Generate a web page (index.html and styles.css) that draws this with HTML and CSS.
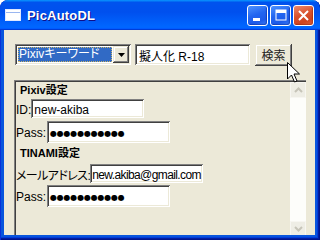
FILE: index.html
```html
<!DOCTYPE html>
<html lang="ja">
<head>
  <meta charset="UTF-8" />
  <meta name="viewport" content="width=device-width, initial-scale=1" />
  <title>PicAutoDL</title>
  <link rel="stylesheet" href="styles.css">
</head>
<body>
  <div class="window">
    <div class="titlebar">
      <svg class="app-icon" width="16" height="16" viewBox="0 0 16 16">
        <rect x="0.5" y="2.5" width="15" height="11" fill="#fff" stroke="#dfe8ff"/>
        <rect x="1" y="3" width="14" height="2" fill="#fff"/>
        <line x1="1" y1="5.5" x2="15" y2="5.5" stroke="#9ab6f0"/>
      </svg>
      <span class="title">PicAutoDL</span>
      <div class="caption-btns">
        <span class="cbtn">
          <svg width="19" height="19" viewBox="0 0 19 19"><rect x="5" y="12" width="7" height="3" fill="#fff"/></svg>
        </span>
        <span class="cbtn">
          <svg width="19" height="19" viewBox="0 0 19 19"><rect x="5" y="4" width="10" height="10" fill="none" stroke="#fff" stroke-width="1"/><rect x="5" y="4" width="10" height="3" fill="#fff"/></svg>
        </span>
        <span class="cbtn close">
          <svg width="19" height="19" viewBox="0 0 19 19"><path d="M5 5 L14 14 M14 5 L5 14" stroke="#fff" stroke-width="2"/></svg>
        </span>
      </div>
    </div>

    <div class="client">
      <div class="toolbar">
        <div class="combo">
          <span class="combo-text">Pixivキーワード</span>
          <span class="combo-btn">
            <svg width="7" height="4" viewBox="0 0 7 4"><path d="M0 0 H7 L3.5 4 Z" fill="#000"/></svg>
          </span>
        </div>
        <div class="field query">擬人化 R-18</div>
        <div class="button">検索</div>
      </div>

      <div class="panel">
        <div class="panel-body">
          <div class="group-title">Pixiv設定</div>
          <div class="row">
            <span class="label">ID:</span>
            <div class="field w-id">new-akiba</div>
          </div>
          <div class="row tall">
            <span class="label">Pass:</span>
            <div class="field w-pass"><span class="dots">●●●●●●●●●●●</span></div>
          </div>

          <div class="group-title second">TINAMI設定</div>
          <div class="row mail">
            <span class="label">メールアドレス:</span>
            <div class="field w-id narrow">new.akiba@gmail.com</div>
          </div>
          <div class="row tall last">
            <span class="label">Pass:</span>
            <div class="field w-pass"><span class="dots">●●●●●●●●●●●</span></div>
          </div>
        </div>

        <div class="scrollbar">
          <span class="sb-btn">
            <svg width="9" height="6" viewBox="0 0 9 6"><path d="M1 5 L4.5 1.5 L8 5" fill="none" stroke="#c6c4b8" stroke-width="2"/></svg>
          </span>
          <span class="sb-track"></span>
          <span class="sb-btn">
            <svg width="9" height="6" viewBox="0 0 9 6"><path d="M1 1 L4.5 4.5 L8 1" fill="none" stroke="#c6c4b8" stroke-width="2"/></svg>
          </span>
        </div>
      </div>
    </div>

    <!-- mouse pointer over the search button -->
    <svg class="cursor" width="13" height="21" viewBox="0 0 13 21">
      <path d="M0.5 0.5 V17 L4.5 13 L7.5 20 L10 19 L7 12 H12.5 Z" fill="#fff" stroke="#000" stroke-width="1" stroke-linejoin="miter"/>
    </svg>
  </div>
</body>
</html>
```

FILE: styles.css
```css
* {
  box-sizing: border-box;
  margin: 0;
  padding: 0;
}

body {
  background: #fff;
  font-family: "Liberation Sans", "Noto Sans CJK JP", sans-serif;
  font-size: 12px;
  font-feature-settings: "palt";
  color: #000;
}

.window {
  position: relative;
  width: 320px;
  height: 240px;
  display: flex;
  flex-direction: column;
  background: #0855dd;
  border-radius: 8px 8px 0 0;
  overflow: hidden;
  box-shadow: inset 1px 0 #0831d9, inset -1px -1px #00138c, inset -2px -2px #001ea0, inset -3px -3px #003bda;
}

.titlebar {
  height: 30px;
  display: flex;
  align-items: center;
  padding: 0 6px 0 5px;
  background: linear-gradient(180deg, #0997ff, #0053ee 8%, #0050ee 40%, #0066ff 88%, #0066ff 93%, #005bff 95%, #003dd7 96%, #003dd7);
  border-radius: 8px 8px 0 0;
}

.app-icon {
  margin-right: 6px;
}

.title {
  font-family: "Liberation Sans", sans-serif;
  font-weight: bold;
  font-size: 13px;
  color: #fff;
  text-shadow: 1px 1px #0f1089;
  letter-spacing: 0.2px;
}

.caption-btns {
  margin-left: auto;
  display: flex;
  gap: 2px;
}

.cbtn {
  width: 21px;
  height: 21px;
  border: 1px solid #fff;
  border-radius: 3px;
  background: linear-gradient(160deg, #4d93ff, #2265f0 45%, #1d5bea 75%, #3a7cf5);
  box-shadow: inset -1px -1px 1px rgba(0, 20, 120, 0.4);
  display: flex;
}

.cbtn.close {
  background: linear-gradient(160deg, #ec8a6c, #d9522e 45%, #cf4420 75%, #e0643e);
  box-shadow: inset -1px -1px 1px rgba(120, 20, 0, 0.4);
}

.client {
  flex: 1;
  margin: 0 5px 5px 4px;
  background: #ece9d8;
  padding: 14px 9px 0 10px;
  overflow: hidden;
}

.toolbar {
  display: flex;
  align-items: center;
  height: 21px;
  margin-left: 1px;
}

.combo {
  width: 116px;
  height: 21px;
  display: flex;
  padding: 2px;
  background: #fff;
  box-shadow: inset 1px 1px #808080, inset -1px -1px #fff, inset 2px 2px #404040, inset -2px -2px #ece9d8;
}

.combo-text {
  flex: 1;
  margin: 1px;
  padding-left: 1px;
  background: #316ac5;
  color: #fff;
  line-height: 15px;
  outline: 1px dotted #c9b46a;
  outline-offset: -1px;
  white-space: nowrap;
  overflow: hidden;
}

.combo-btn,
.button {
  background: #ece9d8;
  box-shadow: inset -1px -1px #404040, inset 1px 1px #ece9d8, inset -2px -2px #808080, inset 2px 2px #fff;
  display: flex;
  align-items: center;
  justify-content: center;
}

.combo-btn {
  width: 16px;
}

.field {
  height: 19px;
  display: flex;
  align-items: center;
  padding: 2px 2px 0 3px;
  background: #fff;
  white-space: nowrap;
  overflow: hidden;
  box-shadow: inset 1px 1px #808080, inset -1px -1px #fff, inset 2px 2px #404040, inset -2px -2px #ece9d8;
}

.field.narrow {
  padding-left: 2px;
  letter-spacing: -0.6px;
}

.query {
  width: 115px;
  height: 21px;
  margin-left: 4px;
  padding-left: 4px;
}

.button {
  width: 37px;
  height: 22px;
  margin-left: 5px;
  color: #222;
}

.panel {
  display: flex;
  height: 157px;
  margin-top: 15px;
  width: 292px;
  border-top: 1px solid #808080;
  border-left: 1px solid #808080;
  box-shadow: inset 1px 1px #404040;
  padding: 1px 0 0 1px;
}

.panel-body {
  flex: 1;
}

.group-title {
  font-size: 11px;
  font-weight: bold;
  line-height: 13px;
  margin: 2px 0 0 4px;
}

.group-title.second {
  margin-top: 4px;
}

.row {
  display: flex;
  align-items: center;
  margin-top: 2px;
}

.row.tall {
  margin-top: 3px;
}

.row.tall .field {
  height: 22px;
}

.row.mail {
  margin-top: 4px;
}

.row.last {
  margin-top: 2px;
}

.label {
  padding-top: 2px;
  white-space: nowrap;
}

.row.mail .label {
  letter-spacing: -0.6px;
}

.w-id {
  width: 113px;
}

.w-pass {
  width: 123px;
  margin-left: 1px;
}

.dots {
  font-family: "DejaVu Sans", sans-serif;
  font-size: 8px;
  letter-spacing: -0.2px;
}

.scrollbar {
  width: 16px;
  display: flex;
  flex-direction: column;
  background: #fdfdfa;
}

.sb-btn {
  height: 16px;
  display: flex;
  align-items: center;
  justify-content: center;
  background: #eeede5;
  border: 1px solid #f7f6f1;
}

.sb-track {
  flex: 1;
}

.cursor {
  position: absolute;
  left: 287px;
  top: 62px;
}
```
